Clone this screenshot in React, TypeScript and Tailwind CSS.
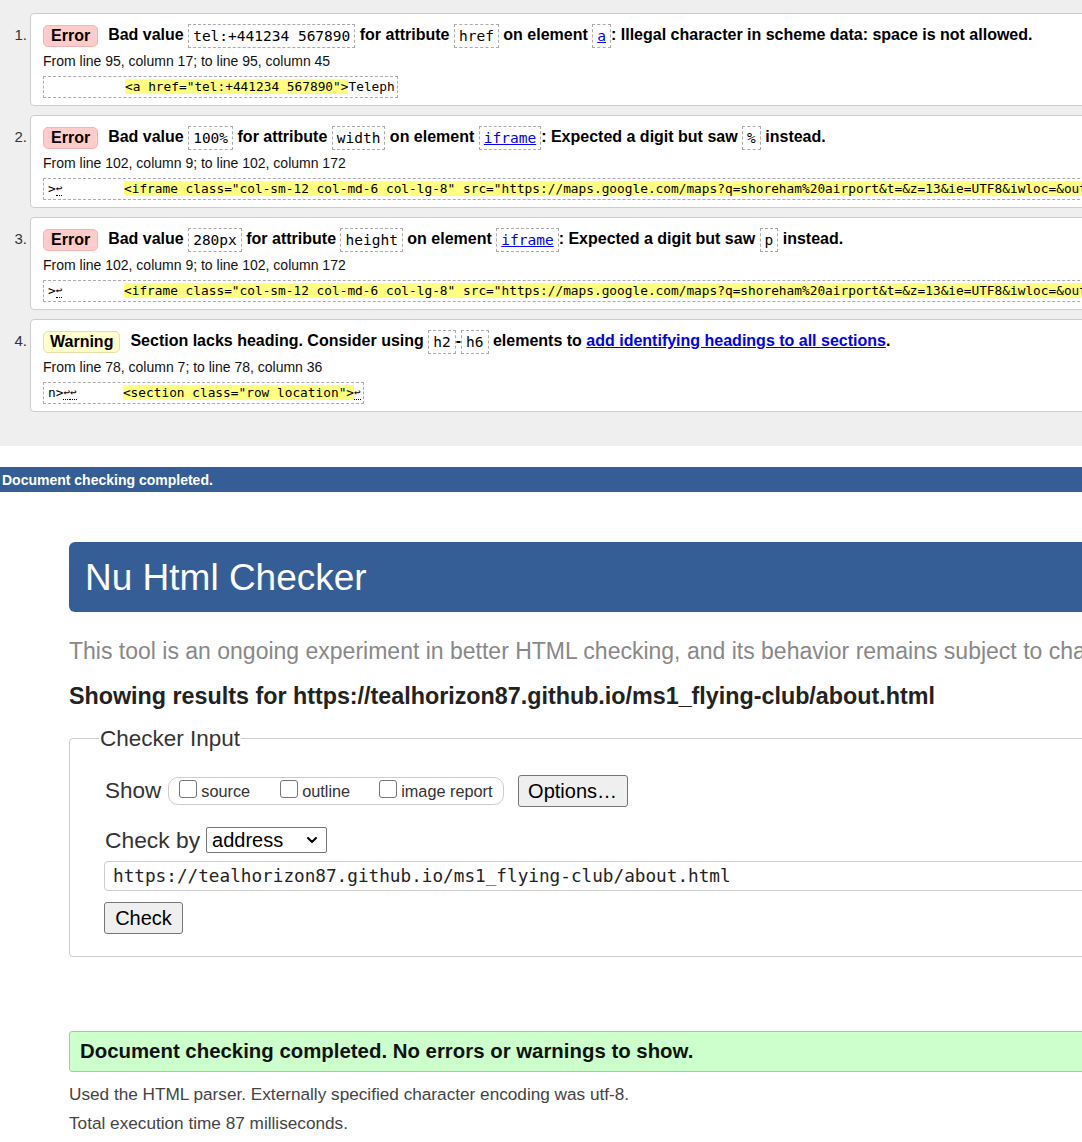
import { ChevronDown } from "lucide-react";
import { ReactNode } from "react";

const MONO = "font-['DejaVu_Sans_Mono',monospace]";

function Code({ children, link }: { children: string; link?: boolean }) {
  return (
    <code
      className={
        link
          ? `inline-block align-middle border border-dashed border-[#aaa] px-[4px] leading-[22px] text-[14.5px] font-normal text-[#0000ee] underline ${MONO}`
          : `inline-block align-middle border border-dashed border-[#aaa] px-[4px] leading-[22px] text-[14.5px] font-normal text-black ${MONO}`
      }
    >
      {children}
    </code>
  );
}

function Badge({ kind }: { kind: "Error" | "Warning" }) {
  return (
    <span
      className={
        kind === "Error"
          ? "inline-block align-middle rounded-[5px] border border-[#f0b4b4] bg-[#ffcccc] px-[7px] leading-[20px] mr-[10px]"
          : "inline-block align-middle rounded-[5px] border border-[#e6e0a8] bg-[#ffffcc] px-[6px] leading-[20px] mr-[10px]"
      }
    >
      {kind}
    </span>
  );
}

function Lf() {
  return <span className="border-b border-dotted border-black text-[11px] align-top">↩</span>;
}

function Hl({ children }: { children: string }) {
  return <span className="bg-[#ffff80]">{children}</span>;
}

function Message({ n, message, location, extract }: { n: number; message: ReactNode; location: string; extract: ReactNode }) {
  return (
    <div className="flex">
      <div className="w-[30px] flex-none pt-[9px] pr-[3px] text-right text-[15px] leading-[26px] text-[#333]">{n}.</div>
      <div className="w-[1100px] flex-none rounded-[4px] border border-[#ccc] bg-white pl-[12px] pt-[8px] pb-[7px]">
        <div className="h-[26px] whitespace-nowrap text-[16px] font-bold leading-[26px] text-black">{message}</div>
        <div className="mt-[3px] h-[20px] text-[14px] leading-[20px] text-[#111]">{location}</div>
        <div className={`mt-[5px] inline-block h-[22px] whitespace-pre border border-dashed border-[#aaa] pl-[4px] pr-[2px] text-[12.8px] leading-[20px] text-black ${MONO}`}>
          {extract}
        </div>
      </div>
    </div>
  );
}

function Checkbox({ label, gap }: { label: string; gap: string }) {
  return (
    <div className={`flex items-center ${gap}`}>
      <span className="mb-[5px] h-[18px] w-[18px] rounded-[3px] border border-[#767676] bg-white" />
      <span className="ml-[4px] text-[16.3px] text-[#333]">{label}</span>
    </div>
  );
}

export default function App() {
  const iframeTag = '<iframe class="col-sm-12 col-md-6 col-lg-8" src="https://maps.google.com/maps?q=shoreham%20airport&t=&z=13&ie=UTF8&iwloc=&output=embed" frameborder="0"';

  return (
    <div className="w-full overflow-hidden bg-white font-['Liberation_Sans',Arial,sans-serif]">
      <div className="flex flex-col gap-[9px] bg-[#efefef] pt-[13px] pb-[34px]">
        <Message
          n={1}
          message={
            <>
              <Badge kind="Error" />
              Bad value <Code>tel:+441234 567890</Code> for attribute <Code>href</Code> on element <Code link>a</Code>: Illegal character in scheme data: space is not allowed.
            </>
          }
          location="From line 95, column 17; to line 95, column 45"
          extract={
            <>
              {"          "}
              <Hl>{'<a href="tel:+441234 567890">'}</Hl>
              Teleph
            </>
          }
        />
        <Message
          n={2}
          message={
            <>
              <Badge kind="Error" />
              Bad value <Code>100%</Code> for attribute <Code>width</Code> on element <Code link>iframe</Code>: Expected a digit but saw <Code>%</Code> instead.
            </>
          }
          location="From line 102, column 9; to line 102, column 172"
          extract={
            <>
              {">"}
              <Lf />
              {"        "}
              <Hl>{iframeTag}</Hl>
            </>
          }
        />
        <Message
          n={3}
          message={
            <>
              <Badge kind="Error" />
              Bad value <Code>280px</Code> for attribute <Code>height</Code> on element <Code link>iframe</Code>: Expected a digit but saw <Code>p</Code> instead.
            </>
          }
          location="From line 102, column 9; to line 102, column 172"
          extract={
            <>
              {">"}
              <Lf />
              {"        "}
              <Hl>{iframeTag}</Hl>
            </>
          }
        />
        <Message
          n={4}
          message={
            <>
              <Badge kind="Warning" />
              Section lacks heading. Consider using <Code>h2</Code>-<Code>h6</Code> elements to{" "}
              <span className="text-[#0000ee] underline">add identifying headings to all sections</span>.
            </>
          }
          location="From line 78, column 7; to line 78, column 36"
          extract={
            <>
              {"n>"}
              <Lf />
              <Lf />
              {"      "}
              <Hl>{'<section class="row location">'}</Hl>
              <Lf />
            </>
          }
        />
      </div>

      <div className="mt-[21px] h-[25px] whitespace-nowrap bg-[#365e96] pl-[2px] text-[14px] font-bold leading-[26px] text-white">
        Document checking completed.
      </div>

      <div className="pl-[69px] pt-[50px] pb-[10px]">
        <div className="flex h-[70px] w-[1100px] items-center rounded-[6px] bg-[#365e96] pl-[16px] text-[37px] leading-none text-white">
          Nu Html Checker
        </div>
        <p className="mt-[26px] whitespace-nowrap text-[23px] leading-[26px] text-[#888]">
          This tool is an ongoing experiment in better HTML checking, and its behavior remains subject to change
        </p>
        <p className="mt-[19px] whitespace-nowrap text-[23.3px] font-bold leading-[26px] text-[#222]">
          Showing results for https://tealhorizon87.github.io/ms1_flying-club/about.html
        </p>

        <fieldset className="mt-[17px] w-[1100px] rounded-[4px] border border-[#ccc] pb-[22px]">
          <legend className="ml-[29px] px-[1px] text-[22.5px] leading-[25px] text-[#333]">Checker Input</legend>

          <div className="px-[35px]">
            <div className="mt-[24px] flex h-[32px] items-center">
              <span className="text-[22.5px] text-[#333]">Show</span>
              <div className="ml-[7px] flex h-[28px] items-center rounded-[10px] border border-[#ccc] px-[10px]">
                <Checkbox label="source" gap="" />
                <Checkbox label="outline" gap="ml-[30px]" />
                <Checkbox label="image report" gap="ml-[29px]" />
              </div>
              <button className="ml-[14px] h-[32px] w-[110px] rounded-[3px] border border-[#767676] bg-[#efefef] text-[20px] text-black">
                Options…
              </button>
            </div>

            <div className="mt-[20px] flex h-[26px] items-center">
              <span className="text-[22.8px] text-[#333]">Check by</span>
              <div className="ml-[6px] flex h-[26px] w-[121px] items-center justify-between rounded-[2px] border border-[#767676] bg-white pl-[5px] pr-[6px] text-[20px] text-black">
                <span>address</span>
                <ChevronDown size={16} strokeWidth={3} />
              </div>
            </div>

            <div className={`mt-[8px] -ml-[1px] flex h-[30px] w-[1100px] items-center rounded-[4px] border border-[#ccc] pl-[8px] text-[17.7px] text-[#222] ${MONO}`}>
              https://tealhorizon87.github.io/ms1_flying-club/about.html
            </div>

            <button className="mt-[11px] -ml-[1px] h-[32px] w-[79px] rounded-[3px] border border-[#767676] bg-[#efefef] text-[20px] text-black">
              Check
            </button>
          </div>
        </fieldset>

        <div className="mt-[74px] flex h-[41px] w-[1100px] items-center rounded-[3px] border border-[#bbb] bg-[#ccffcc] pl-[10px] text-[20.4px] font-bold text-[#111]">
          Document checking completed. No errors or warnings to show.
        </div>
        <p className="mt-[11px] h-[22px] text-[17.2px] leading-[22px] text-[#444]">
          Used the HTML parser. Externally specified character encoding was utf-8.
        </p>
        <p className="mt-[7px] h-[22px] text-[17.2px] leading-[22px] text-[#444]">Total execution time 87 milliseconds.</p>
      </div>
    </div>
  );
}
